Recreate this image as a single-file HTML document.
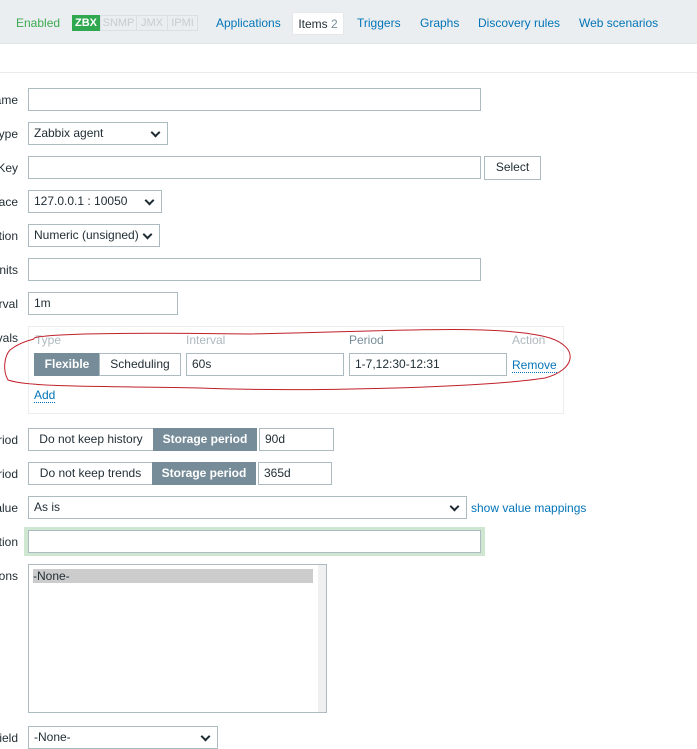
<!DOCTYPE html><html><head><style>
body{margin:0;width:697px;height:737px;overflow:hidden;background:#fff;font-family:"Liberation Sans",Arial,sans-serif;font-size:12px;color:#1f2c33;position:relative}
.a{position:absolute}
.top{left:0;top:0;width:697px;height:43px;background:#ebeef0;border-bottom:1px solid #dfe4e7}
.in{position:absolute;border:1px solid #acbbc2;background:#fff;box-sizing:border-box;padding-left:5px;line-height:21px;height:23px;white-space:nowrap}
.sel:after{content:"";position:absolute;right:8px;top:6px;width:5px;height:5px;border-right:2px solid #1f2c33;border-bottom:2px solid #1f2c33;transform:rotate(45deg)}
.lb{position:absolute;right:679px;text-align:right;white-space:nowrap}
.lk{color:#0275b8}
.dk{background:#768d99;color:#fff;font-weight:bold;text-align:center;padding:0;border-color:#768d99}
.bt{text-align:center;padding:0}
.g{color:#aeb9bf}
.sb{position:absolute;top:15px;height:16px;box-sizing:border-box;border:1px solid #d9dfe2;color:#c5cdd1;font-size:11px;line-height:14px;text-align:center;white-space:nowrap}
</style></head><body>
<div class="a top"></div>
<div class="a" style="left:16px;top:16px;color:#3daa52">Enabled</div>
<div class="a" style="left:72px;top:15px;width:28px;height:16px;background:#2fa84f;color:#fff;font-weight:bold;text-align:center;line-height:16px;font-size:11px">ZBX</div>
<div class="sb" style="left:100px;width:37px">SNMP</div>
<div class="sb" style="left:136px;width:32px">JMX</div>
<div class="sb" style="left:167px;width:31px">IPMI</div>
<div class="a lk" style="left:216px;top:16px">Applications</div>
<div class="a" style="left:292px;top:12px;width:52px;height:23px;background:#fff;line-height:23px;text-align:center;border:1px solid #e4e8ea;box-sizing:border-box">Items <span style="color:#768d99">2</span></div>
<div class="a lk" style="left:357px;top:16px">Triggers</div>
<div class="a lk" style="left:420px;top:16px">Graphs</div>
<div class="a lk" style="left:478px;top:16px">Discovery rules</div>
<div class="a lk" style="left:579px;top:16px">Web scenarios</div>
<div class="a" style="left:0;top:72px;width:697px;height:1px;background:#e8ebed"></div>

<div class="lb" style="top:93px">ame</div><div class="in" style="left:28px;top:88px;width:453px"></div>
<div class="lb" style="top:127px">ype</div><div class="in sel" style="left:28px;top:122px;width:140px">Zabbix agent</div>
<div class="lb" style="top:161px">Key</div><div class="in" style="left:28px;top:156px;width:453px"></div>
<div class="in bt" style="left:484px;top:156px;width:57px;height:24px;background:#fff">Select</div>
<div class="lb" style="top:195px">ace</div><div class="in sel" style="left:28px;top:190px;width:134px">127.0.0.1 : 10050</div>
<div class="lb" style="top:229px">tion</div><div class="in sel" style="left:28px;top:224px;width:132px">Numeric (unsigned)</div>
<div class="lb" style="top:263px">nits</div><div class="in" style="left:28px;top:258px;width:453px"></div>
<div class="lb" style="top:297px">rval</div><div class="in" style="left:28px;top:292px;width:150px">1m</div>
<div class="lb" style="top:331px">vals</div>
<div class="a" style="left:28px;top:326px;width:534px;height:86px;border:1px solid #ebeef0"></div>
<div class="a g" style="left:35px;top:333px">Type</div><div class="a g" style="left:186px;top:333px">Interval</div><div class="a" style="left:349px;top:333px;color:#768d99">Period</div><div class="a g" style="left:512px;top:333px">Action</div>
<div class="in dk" style="left:34px;top:353px;width:66px">Flexible</div>
<div class="in bt" style="left:99px;top:353px;width:82px">Scheduling</div>
<div class="in" style="left:186px;top:353px;width:158px">60s</div>
<div class="in" style="left:349px;top:353px;width:158px">1-7,12:30-12:31</div>
<div class="a lk" style="left:512px;top:358px;border-bottom:1px dotted #0275b8">Remove</div>
<div class="a lk" style="left:34px;top:388px;border-bottom:1px dotted #0275b8">Add</div>
<svg class="a" style="left:0;top:320px" width="580" height="80"><path d="M34,19 C30,14 120,12 250,14 C380,12 500,3 550,18 C580,28 575,50 545,58 C480,68 300,72 200,68 C120,66 30,68 8,60 C2,50 5,35 10,30 C20,22 30,20 34,19" fill="none" stroke="#c0202a" stroke-width="1"/></svg>
<div class="lb" style="top:433px">riod</div>
<div class="in bt" style="left:28px;top:428px;width:126px">Do not keep history</div>
<div class="in dk" style="left:153px;top:428px;width:104px">Storage period</div>
<div class="in" style="left:259px;top:428px;width:75px">90d</div>
<div class="lb" style="top:467px">riod</div>
<div class="in bt" style="left:28px;top:462px;width:125px">Do not keep trends</div>
<div class="in dk" style="left:152px;top:462px;width:104px">Storage period</div>
<div class="in" style="left:258px;top:462px;width:74px">365d</div>
<div class="lb" style="top:501px">alue</div><div class="in sel" style="left:28px;top:496px;width:439px">As is</div>
<div class="a lk" style="left:471px;top:501px">show value mappings</div>
<div class="lb" style="top:535px">tion</div>
<div class="a" style="left:24px;top:527px;width:461px;height:29px;background:#cfe6d0"></div>
<div class="in" style="left:28px;top:530px;width:453px"></div>
<div class="lb" style="top:569px">ons</div>
<div class="a" style="left:28px;top:564px;width:299px;height:149px;border:1px solid #acbbc2;box-sizing:border-box"></div>
<div class="a" style="left:33px;top:569px;width:280px;height:14px;background:#ccc;line-height:14px">-None-</div>
<div class="a" style="left:318px;top:565px;width:8px;height:147px;background:#f0f0f0"></div>
<div class="lb" style="top:731px">ield</div><div class="in sel" style="left:28px;top:726px;width:190px">-None-</div>
</body></html>
